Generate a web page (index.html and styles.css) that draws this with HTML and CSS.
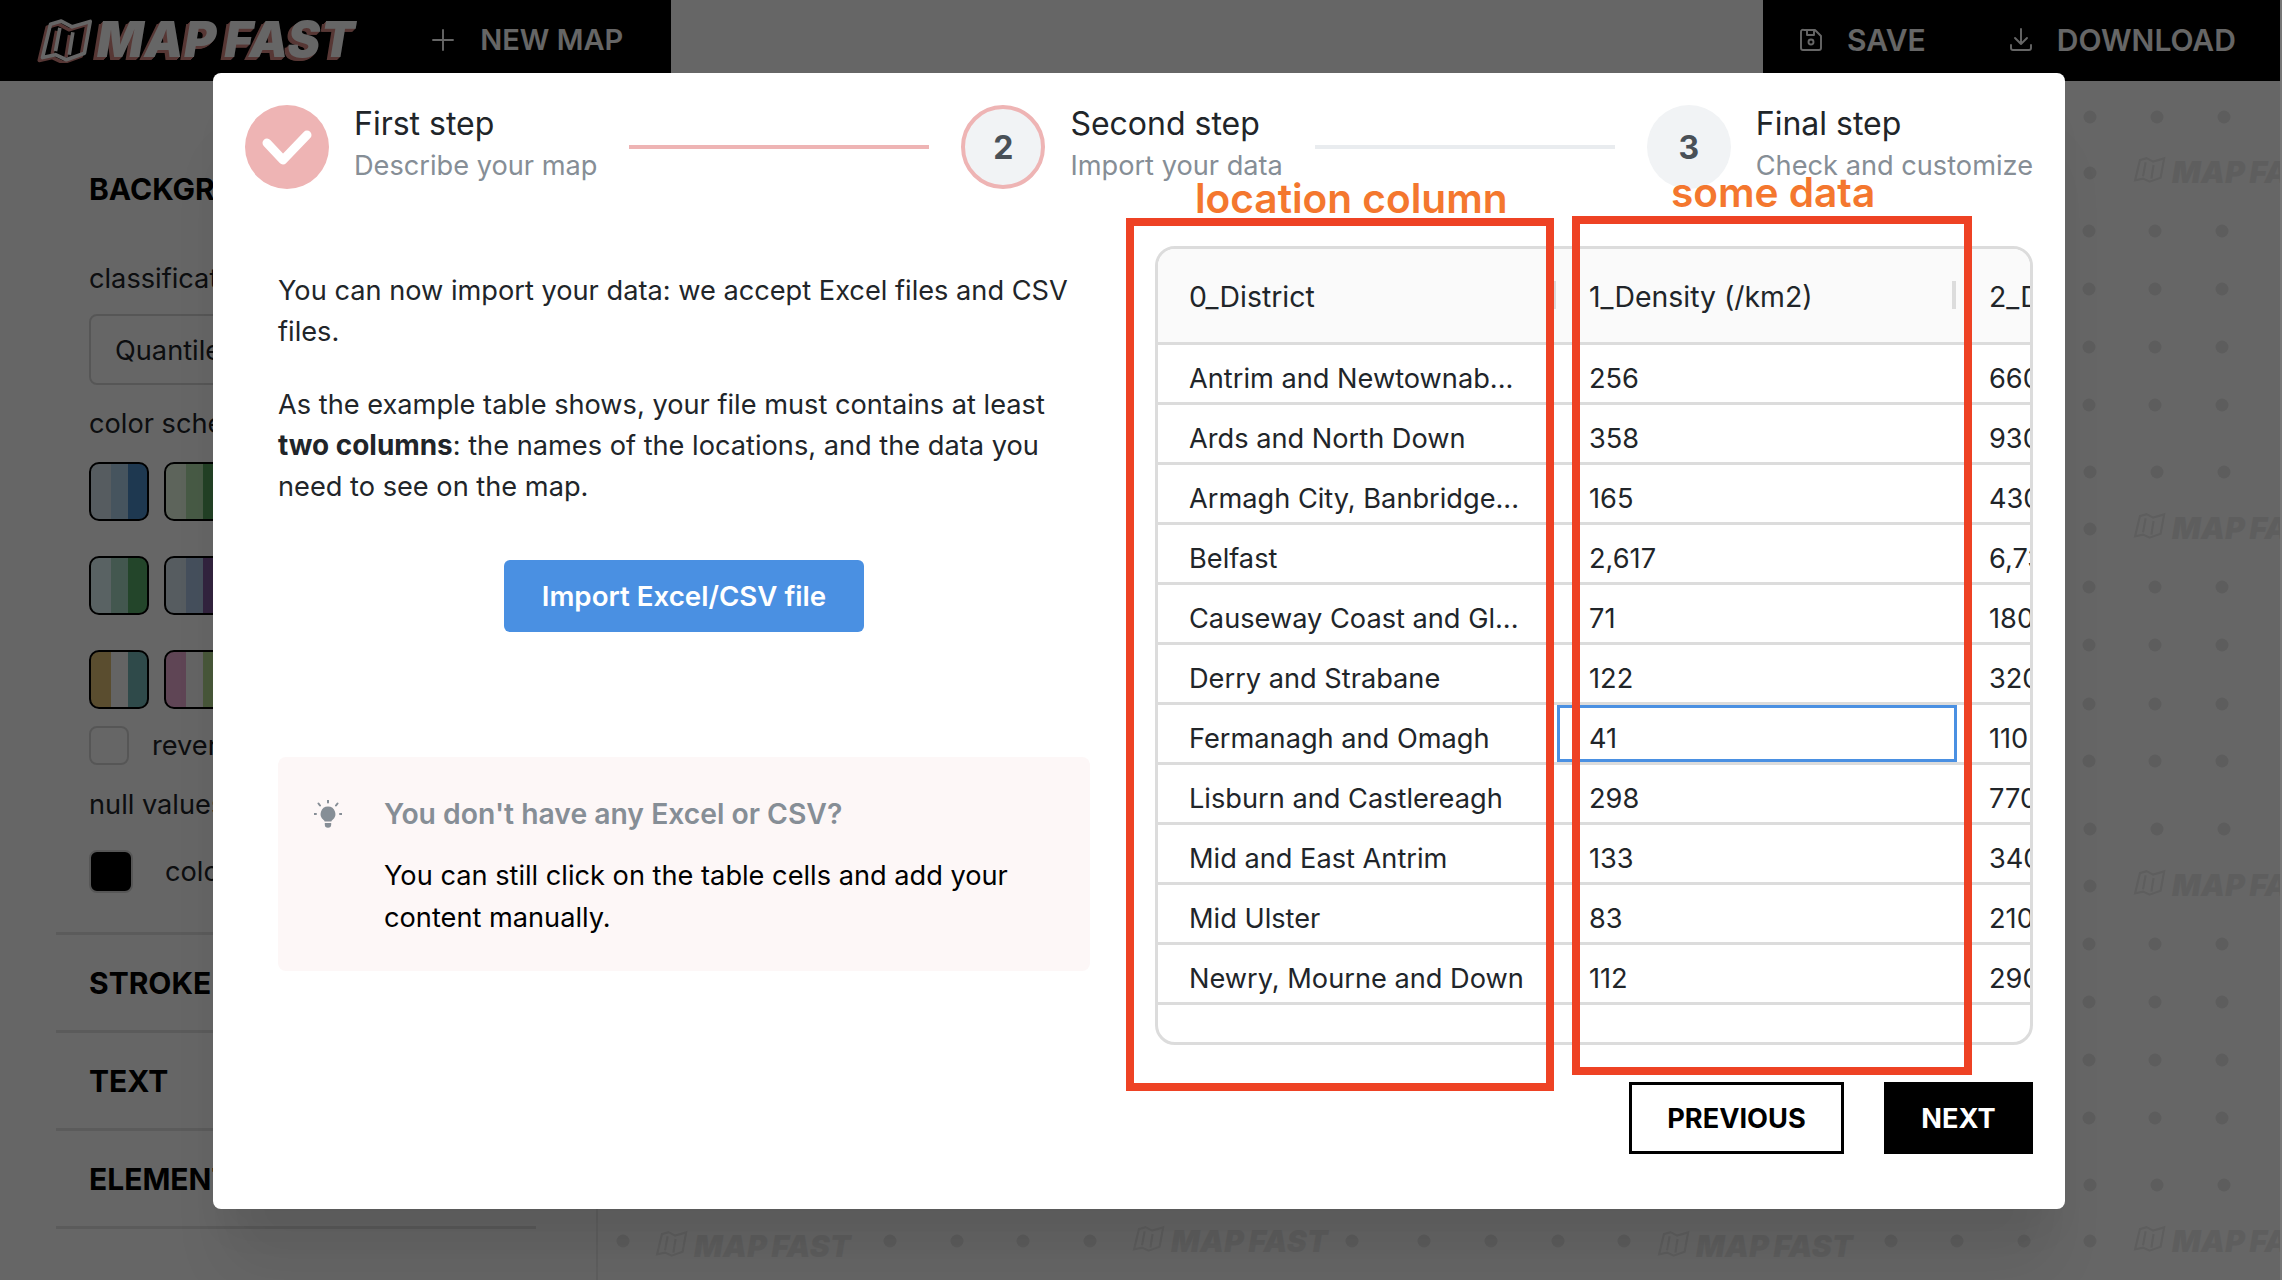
FILE: index.html
```html
<!DOCTYPE html>
<html lang="en">
<head>
    <meta charset="UTF-8">
    <title>Map Fast</title>
    <link rel="stylesheet" href="styles.css">
</head>
<body>
<svg class="defs" width="0" height="0">
    <defs>
        <g id="map-icon">
            <path d="M62 38 L92 29 L122 45 L172 30 L156 118 L106 136 L76 122 L40 130 Z"/>
            <path d="M88 48 L76 112 M124 60 L114 122"/>
        </g>
        <g id="dots-a">
            <circle cx="2089" cy="0" r="6.5"/><circle cx="2155" cy="0" r="6.5"/><circle cx="2222" cy="0" r="6.5"/>
        </g>
        <g id="dots-b">
            <circle cx="2090" cy="0" r="6.5"/><circle cx="2157" cy="0" r="6.5"/><circle cx="2224" cy="0" r="6.5"/>
        </g>
        <g id="mark">
            <g class="mark-icon" transform="scale(0.22) translate(-35 -92)"><use href="#map-icon"/></g>
            <text class="mark-text" x="38" y="11">MAP FAST</text>
        </g>
    </defs>
</svg>

<div class="page">
    <header class="topbar">
        <div class="topbar-left">
            <a class="logo">
                <svg class="logo-icon" viewBox="25 15 160 130">
                    <use href="#map-icon" class="logo-icon-shadow" x="-9" y="8"/>
                    <use href="#map-icon" class="logo-icon-face"/>
                </svg>
                <span class="logo-text">MAP FAST</span>
            </a>
            <a class="top-btn new-map">
                <svg class="top-icon" viewBox="0 0 24 24"><path d="M12 2v20M2 12h20"/></svg>
                NEW MAP
            </a>
        </div>
        <div class="topbar-right">
            <a class="top-btn">
                <svg class="top-icon" viewBox="0 0 24 24">
                    <path d="M5 2h11l6 6v12a2 2 0 0 1-2 2H4a2 2 0 0 1-2-2V4a2 2 0 0 1 3-2z"/>
                    <circle cx="12" cy="14" r="2.5"/>
                    <path d="M15 2v5H8V2"/>
                </svg>
                SAVE
            </a>
            <a class="top-btn">
                <svg class="top-icon" viewBox="0 0 24 24">
                    <path d="M2 17v3a2 2 0 0 0 2 2h16a2 2 0 0 0 2-2v-3M6 10l6 6 6-6M12 1v15"/>
                </svg>
                DOWNLOAD
            </a>
        </div>
    </header>

    <div class="workspace">
        <aside class="sidebar">
            <section class="section open">
                <h3 class="section-title">BACKGROUND</h3>
                <div class="field-label first">classification</div>
                <div class="select">Quantile</div>
                <div class="field-label">color scheme</div>
                <div class="schemes">
                    <div class="scheme scheme-blue"></div>
                    <div class="scheme scheme-green"></div>
                    <div class="scheme scheme-teal"></div>
                    <div class="scheme scheme-purple"></div>
                    <div class="scheme scheme-brown"></div>
                    <div class="scheme scheme-pink"></div>
                </div>
                <label class="check-row"><span class="checkbox"></span>reverse</label>
                <div class="field-label null-label">null values</div>
                <div class="color-row"><span class="color-box"></span>color</div>
            </section>
            <section class="section"><h3 class="section-title">STROKE</h3></section>
            <section class="section"><h3 class="section-title">TEXT</h3></section>
            <section class="section"><h3 class="section-title">ELEMENTS</h3></section>
        </aside>

        <main class="map">
            <svg class="map-svg" viewBox="598 81 1684 1199">
                <g class="dots">
                    <use href="#dots-b" y="117"/>
                    <use href="#dots-a" y="231"/>
                    <use href="#dots-a" y="289"/>
                    <use href="#dots-a" y="347"/>
                    <use href="#dots-a" y="405"/>
                    <use href="#dots-b" y="472"/>
                    <use href="#dots-a" y="587"/>
                    <use href="#dots-a" y="645"/>
                    <use href="#dots-a" y="704"/>
                    <use href="#dots-a" y="761"/>
                    <use href="#dots-b" y="829"/>
                    <use href="#dots-a" y="944"/>
                    <use href="#dots-a" y="1002"/>
                    <use href="#dots-a" y="1060"/>
                    <use href="#dots-a" y="1118"/>
                    <use href="#dots-b" y="1185"/>
                    <circle cx="2090" cy="173" r="6.5"/>
                    <circle cx="2090" cy="529" r="6.5"/>
                    <circle cx="2090" cy="886" r="6.5"/>
                    <circle cx="623" cy="1241" r="6.5"/>
                    <circle cx="890" cy="1241" r="6.5"/>
                    <circle cx="957" cy="1241" r="6.5"/>
                    <circle cx="1023" cy="1241" r="6.5"/>
                    <circle cx="1090" cy="1241" r="6.5"/>
                    <circle cx="1352" cy="1241" r="6.5"/>
                    <circle cx="1424" cy="1241" r="6.5"/>
                    <circle cx="1491" cy="1241" r="6.5"/>
                    <circle cx="1558" cy="1241" r="6.5"/>
                    <circle cx="1624" cy="1241" r="6.5"/>
                    <circle cx="1891" cy="1241" r="6.5"/>
                    <circle cx="1957" cy="1241" r="6.5"/>
                    <circle cx="2024" cy="1241" r="6.5"/>
                    <circle cx="2090" cy="1241" r="6.5"/>
                </g>
                <use href="#mark" x="2134" y="172"/>
                <use href="#mark" x="2134" y="528"/>
                <use href="#mark" x="2134" y="885"/>
                <use href="#mark" x="656" y="1246"/>
                <use href="#mark" x="1133" y="1241"/>
                <use href="#mark" x="1658" y="1246"/>
                <use href="#mark" x="2134" y="1241"/>
            </svg>
        </main>
    </div>

    <div class="overlay"></div>

    <div class="modal">
        <div class="stepper">
            <div class="step">
                <div class="step-circle done">
                    <svg class="check-icon" viewBox="0 0 84 84"><path d="M22 38 L38 55 L62 30"/></svg>
                </div>
                <div class="step-text">
                    <div class="step-label">First step</div>
                    <div class="step-desc">Describe your map</div>
                </div>
            </div>
            <div class="step-line active"></div>
            <div class="step">
                <div class="step-circle current">2</div>
                <div class="step-text">
                    <div class="step-label">Second step</div>
                    <div class="step-desc">Import your data</div>
                </div>
            </div>
            <div class="step-line"></div>
            <div class="step">
                <div class="step-circle">3</div>
                <div class="step-text">
                    <div class="step-label">Final step</div>
                    <div class="step-desc">Check and customize</div>
                </div>
            </div>
        </div>

        <div class="modal-body">
            <div class="intro">
                <p>You can now import your data: we accept Excel files and CSV files.</p>
                <p>As the example table shows, your file must contains at least <b>two columns</b>: the names of the locations, and the data you need to see on the map.</p>
                <div class="import-wrap"><button class="import-btn">Import Excel/CSV file</button></div>
                <div class="hint">
                    <svg class="hint-icon" viewBox="0 0 28 28">
                        <path class="bulb" d="M14 6.5a7.5 7.5 0 0 0-4.4 13.5c.7.6 1 1 1 1.6h6.800c0-.6.3-1 1-1.600A7.500 7.500 0 0 0 14 6.500z"/>
                        <path class="bulb" d="M10.800 23h6.400v1.500a3 3 0 0 1-6.400 0z"/>
                        <path class="rays" d="M14 0v2.500M4.500 3.500l1.500 2M23.500 3.500l-1.500 2M0 14h2M26 14h2"/>
                    </svg>
                    <div class="hint-text">
                        <div class="hint-title">You don't have any Excel or CSV?</div>
                        <div class="hint-body">You can still click on the table cells and add your content manually.</div>
                    </div>
                </div>
            </div>

            <div class="data-col">
                <div class="table">
                    <div class="row head">
                        <div class="cell">0_District</div>
                        <div class="cell">1_Density (/km2)</div>
                        <div class="cell">2_Density</div>
                    </div>
                    <div class="row"><div class="cell">Antrim and Newtownab...</div><div class="cell">256</div><div class="cell">660</div></div>
                    <div class="row"><div class="cell">Ards and North Down</div><div class="cell">358</div><div class="cell">930</div></div>
                    <div class="row"><div class="cell">Armagh City, Banbridge...</div><div class="cell">165</div><div class="cell">430</div></div>
                    <div class="row"><div class="cell">Belfast</div><div class="cell">2,617</div><div class="cell">6,730</div></div>
                    <div class="row"><div class="cell">Causeway Coast and Gl...</div><div class="cell">71</div><div class="cell">180</div></div>
                    <div class="row"><div class="cell">Derry and Strabane</div><div class="cell">122</div><div class="cell">320</div></div>
                    <div class="row"><div class="cell">Fermanagh and Omagh</div><div class="cell selected">41</div><div class="cell">110</div></div>
                    <div class="row"><div class="cell">Lisburn and Castlereagh</div><div class="cell">298</div><div class="cell">770</div></div>
                    <div class="row"><div class="cell">Mid and East Antrim</div><div class="cell">133</div><div class="cell">340</div></div>
                    <div class="row"><div class="cell">Mid Ulster</div><div class="cell">83</div><div class="cell">210</div></div>
                    <div class="row"><div class="cell">Newry, Mourne and Down</div><div class="cell">112</div><div class="cell">290</div></div>
                </div>
                <div class="modal-actions">
                    <button class="btn-outline">PREVIOUS</button>
                    <button class="btn-solid">NEXT</button>
                </div>
            </div>
        </div>
    </div>

    <!-- annotations drawn on top of the screenshot -->
    <div class="note-box note-box-location"></div>
    <div class="note-box note-box-data"></div>
    <div class="note note-location">location column</div>
    <div class="note note-data">some data</div>
</div>
</body>
</html>
```

FILE: styles.css
```css
* {
    box-sizing: border-box;
}
html, body {
    margin: 0;
    padding: 0;
}
body {
    width: 2282px;
    height: 1280px;
    overflow: hidden;
    background-color: #fff;
    color: #212529;
    font-family: Inter, "Noto Sans", sans-serif;
    font-size: 27.2px;
}
.defs {
    position: absolute;
}
.page {
    position: relative;
    width: 2282px;
    height: 1280px;
    display: flex;
    flex-direction: column;
}

/* top bar */
.topbar {
    height: 81px;
    flex: none;
    display: flex;
    justify-content: space-between;
    background-color: #fff;
}
.topbar-left, .topbar-right {
    display: flex;
    align-items: center;
    background-color: #000;
}
.topbar-left {
    width: 671px;
    padding-left: 37px;
}
.topbar-right {
    width: 519px;
    padding-left: 36px;
    gap: 83px;
}
.logo {
    display: flex;
    align-items: center;
    margin-top: -3px;
}
.logo-icon {
    width: 58px;
    height: 47px;
    fill: none;
    stroke-width: 10;
    stroke-linejoin: round;
}
.logo-icon-face {
    stroke: #fff;
}
.logo-icon-shadow {
    stroke: #d98a84;
}
.logo-text {
    margin-left: 2px;
    color: #fff;
    font-size: 49px;
    line-height: 1;
    font-weight: 900;
    font-style: italic;
    word-spacing: -3px;
    letter-spacing: 0.7px;
    text-shadow: -1px 1px 0 #d98a84, -2px 2px 0 #d98a84, -3px 3px 0 #d98a84, -4px 3px 0 #d98a84;
}
.top-btn {
    display: flex;
    align-items: center;
    gap: 24px;
    margin-top: -2px;
    color: #fff;
    font-size: 30px;
    font-weight: 600;
}
.new-map {
    margin-left: 76px;
    gap: 25px;
    font-size: 29px;
}
.top-icon {
    width: 24px;
    height: 24px;
    fill: none;
    stroke: #fff;
    stroke-width: 1.9;
    stroke-linecap: round;
    stroke-linejoin: round;
}

/* left panel */
.workspace {
    flex: 1;
    display: flex;
    min-height: 0;
}
.sidebar {
    width: 598px;
    flex: none;
    padding: 0 60px 0 56px;
    border-right: 2px solid #eee;
}
.section {
    height: 98px;
    padding: 0 33px;
    display: flex;
    align-items: center;
    border-bottom: 3px solid #e4e4e4;
}
.section.open {
    height: 854px;
    display: block;
    padding-top: 90px;
    white-space: nowrap;
}
.section-title {
    margin: 0;
    color: #000;
    font-size: 30px;
    line-height: 36px;
    font-weight: 700;
}
.field-label {
    margin-top: 22px;
    line-height: 34px;
}
.field-label.first {
    margin-top: 55px;
}
.select {
    width: 420px;
    height: 71px;
    margin-top: 18px;
    padding-left: 24px;
    line-height: 70px;
    border: 2px solid #d8d8d8;
    border-radius: 8px;
}
.schemes {
    display: grid;
    grid-template-columns: 60px 60px;
    grid-auto-rows: 59px;
    gap: 35px 15px;
    margin-top: 21px;
}
.scheme {
    border: 2px solid #000;
    border-radius: 10px;
}
.scheme-blue {
    background: linear-gradient(to right, #d7e6f0 35%, #afd2eb 35% 66%, #4d8cc8 66%);
}
.scheme-green {
    background: linear-gradient(to right, #e8fae4 35%, #b2e1ac 35% 66%, #58a55f 66%);
}
.scheme-teal {
    background: linear-gradient(to right, #def5f7 35%, #a8dac6 35% 66%, #58ac69 66%);
}
.scheme-purple {
    background: linear-gradient(to right, #d7e6f0 35%, #acc6e6 35% 66%, #805a9e 66%);
}
.scheme-brown {
    background: linear-gradient(to right, #e1c076 35%, #fafafa 35% 66%, #76b9b9 66%);
}
.scheme-pink {
    background: linear-gradient(to right, #eeacd4 35%, #fafafa 35% 66%, #b6dc91 66%);
}
.check-row {
    display: flex;
    align-items: center;
    gap: 23px;
    margin-top: 17px;
    height: 39px;
}
.checkbox {
    width: 40px;
    height: 39px;
    border: 2px solid #d8d8d8;
    border-radius: 8px;
}
.null-label {
    margin-top: 23px;
}
.color-row {
    display: flex;
    align-items: center;
    gap: 32px;
    margin-top: 28px;
}
.color-box {
    width: 44px;
    height: 43px;
    background-color: #000;
    border: 2px solid #d8d8d8;
    border-radius: 8px;
}

/* map behind the dialog */
.map {
    flex: 1;
    min-width: 0;
}
.map-svg {
    display: block;
    width: 100%;
    height: 100%;
}
.dots {
    fill: #e8e8e8;
}
.mark-icon {
    fill: none;
    stroke: #ebebeb;
    stroke-width: 10;
}
.mark-text {
    fill: #ebebeb;
    font-size: 30px;
    font-weight: 900;
    font-style: italic;
    word-spacing: -2px;
    letter-spacing: 0.3px;
}

.overlay {
    position: absolute;
    top: 0;
    left: 0;
    right: 0;
    bottom: 0;
    background-color: rgba(0, 0, 0, 0.6);
    border-right: 2px solid #777;
}

/* dialog */
.modal {
    position: absolute;
    top: 73px;
    left: 213px;
    width: 1852px;
    height: 1136px;
    padding: 32px;
    background-color: #fff;
    border-radius: 8px;
    box-shadow: 0 72px 56px -14px rgba(0, 0, 0, 0.07), 0 34px 34px -14px rgba(0, 0, 0, 0.05);
}
.stepper {
    display: flex;
    align-items: center;
    height: 84px;
}
.step {
    display: flex;
    align-items: center;
    flex: none;
    gap: 25px;
}
.step-circle {
    width: 84px;
    height: 84px;
    display: flex;
    align-items: center;
    justify-content: center;
    background-color: #f1f3f5;
    border-radius: 50%;
    color: #495057;
    font-size: 32px;
    font-weight: 700;
}
.step-circle.done {
    background-color: #eeb4b4;
}
.step-circle.current {
    border: 4px solid #eeb4b4;
}
.check-icon {
    width: 84px;
    height: 84px;
    fill: none;
    stroke: #fff;
    stroke-width: 9;
    stroke-linecap: round;
    stroke-linejoin: round;
}
.step-text {
    padding-bottom: 6px;
}
.step-label {
    font-size: 32px;
    line-height: 42px;
}
.step-desc {
    color: #868e96;
    line-height: 41px;
}
.step-line {
    flex: 1;
    height: 4px;
    margin: 0 32px;
    background-color: #e9ecef;
}
.step-line.active {
    background-color: #eeb4b4;
}
.modal-body {
    display: grid;
    grid-template-columns: 910px 878px;
    margin-top: 57px;
}
.intro {
    padding: 24px 65px 0 33px;
    line-height: 41px;
}
.intro p {
    margin: 0 0 32px;
}
.intro b {
    font-size: 27.9px;
}
.import-wrap {
    display: flex;
    justify-content: center;
    margin-top: 53px;
}
.import-btn {
    width: 360px;
    height: 72px;
    background-color: #4a90e2;
    color: #fff;
    font: 600 27.7px Inter, sans-serif;
    border: none;
    border-radius: 6px;
}
.hint {
    display: flex;
    gap: 42px;
    height: 214px;
    margin-top: 125px;
    padding: 36px 40px 0 36px;
    background-color: #fdf7f7;
    border-radius: 8px;
    line-height: 42px;
}
.hint-icon {
    width: 28px;
    height: 28px;
    flex: none;
    margin-top: 7px;
}
.bulb {
    fill: #868e96;
}
.rays {
    fill: none;
    stroke: #868e96;
    stroke-width: 2;
    stroke-linecap: round;
}
.hint-title {
    color: #868e96;
    font-size: 28.3px;
    font-weight: 600;
}
.hint-body {
    margin-top: 20px;
    color: #000;
}

/* data table */
.table {
    height: 799px;
    border: 3px solid #dcdcdc;
    border-radius: 20px;
    overflow: hidden;
}
.row {
    display: grid;
    grid-template-columns: 399px 400px 1fr;
    height: 60px;
    border-bottom: 3px solid #dcdcdc;
}
.row.head {
    height: 96px;
    background-color: #fafafa;
    font-size: 28.4px;
}
.cell {
    position: relative;
    padding: 9px 0 0 32px;
    display: flex;
    align-items: center;
    white-space: nowrap;
    overflow: hidden;
}
.cell:first-child {
    padding-left: 31px;
}
.head .cell {
    padding-top: 1px;
}
.head .cell:not(:last-child)::after {
    content: "";
    position: absolute;
    top: 32px;
    right: 1px;
    width: 4px;
    height: 28px;
    background-color: #dcdcdc;
}
.cell.selected {
    box-shadow: inset 0 0 0 3px #4a90e2;
}
.modal-actions {
    display: flex;
    justify-content: flex-end;
    gap: 40px;
    margin-top: 37px;
}
.btn-outline, .btn-solid {
    height: 72px;
    font: 700 27.2px Inter, sans-serif;
    border: 3px solid #000;
}
.btn-outline {
    width: 215px;
    background-color: #fff;
    color: #000;
}
.btn-solid {
    width: 149px;
    background-color: #000;
    color: #fff;
}

/* red annotations */
.note-box {
    position: absolute;
    border: 8px solid #ee4224;
}
.note-box-location {
    top: 218px;
    left: 1126px;
    width: 428px;
    height: 873px;
}
.note-box-data {
    top: 216px;
    left: 1572px;
    width: 400px;
    height: 859px;
}
.note {
    position: absolute;
    color: #f4772e;
    font-size: 40.6px;
    font-weight: 600;
    line-height: 50px;
    white-space: nowrap;
}
.note-location {
    top: 174px;
    left: 1195px;
}
.note-data {
    top: 168px;
    left: 1671px;
}
```
